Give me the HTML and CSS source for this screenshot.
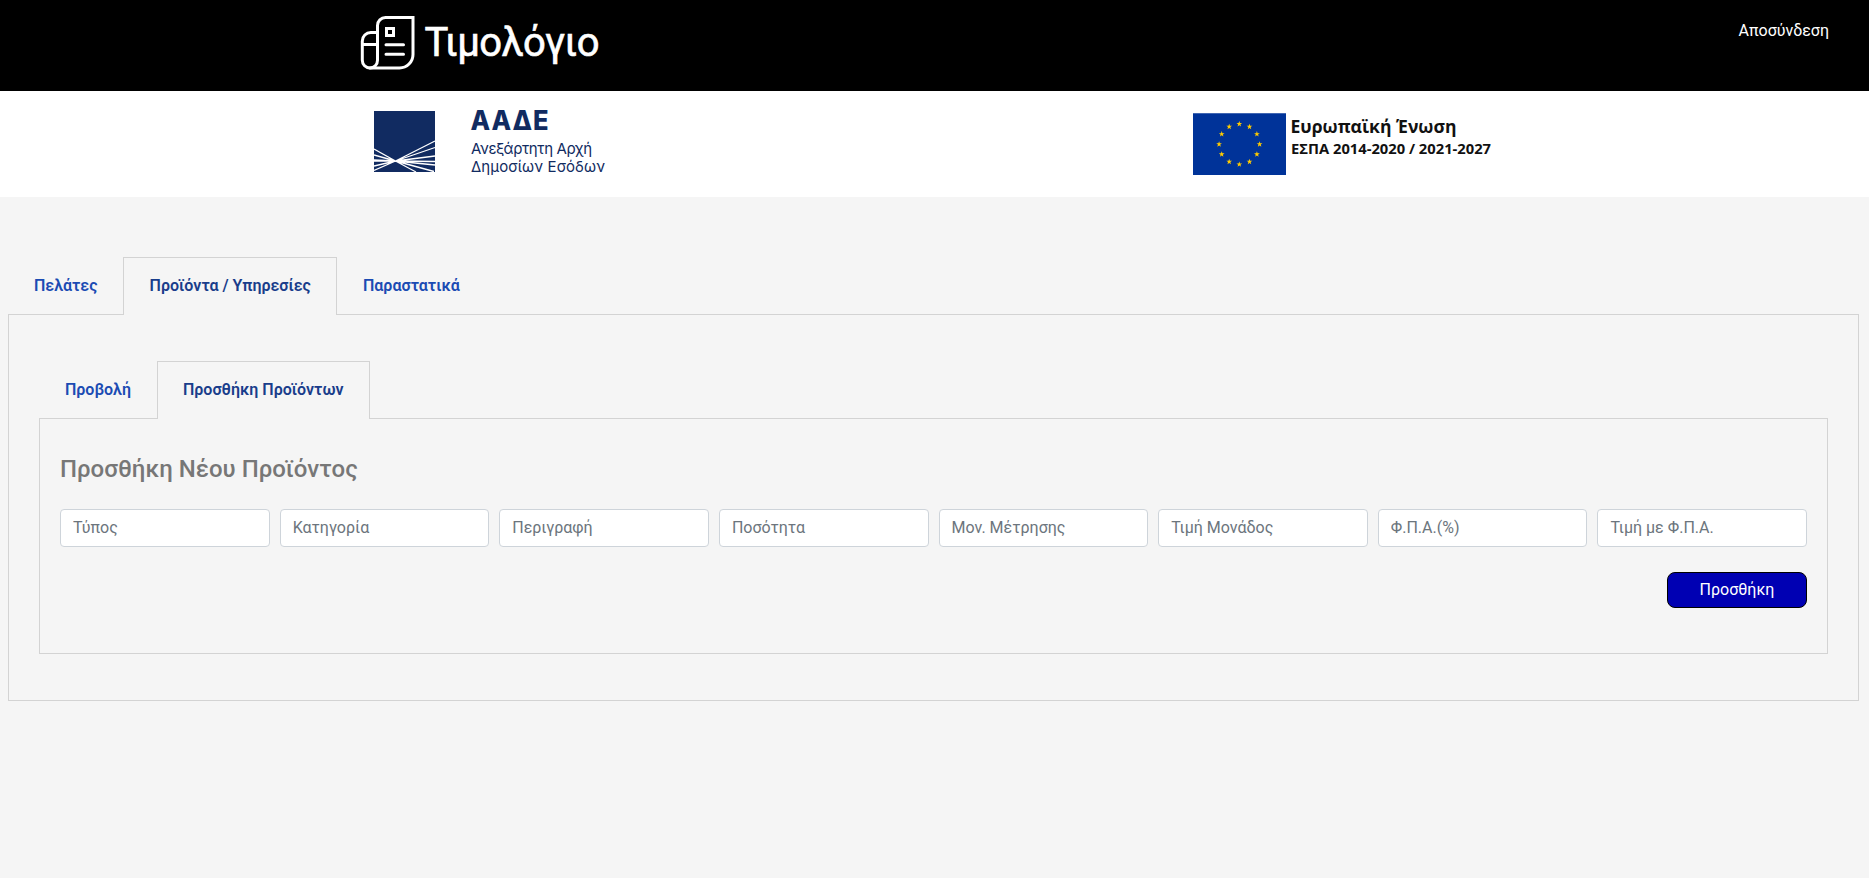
FILE: index.html
```html
<!DOCTYPE html>
<html lang="el">
<head>
<meta charset="utf-8">
<title>Τιμολόγιο</title>
<link rel="stylesheet" href="styles.css">
</head>
<body>
<header class="topbar">
  <svg class="brand" width="250" height="72" viewBox="0 0 250 72" aria-label="Τιμολόγιο">
    <g fill="none" stroke="#fff" stroke-width="3" stroke-linecap="round">
      <path d="M18.500 58V25.500a8 8 0 0 1 8-8H54V54.500a13.500 13.500 0 0 1-13.500 13.500H11a7.700 7.700 0 0 1-7.700-7.700V41a8.500 8.500 0 0 1 8.500-8.500H18.500"/>
      <path d="M18.500 56V60.300a7.600 7.600 0 0 1-7.600 7.700M3.500 44.500H18.500"/>
      <path d="M27.500 28.500h7v7h-7zM27 44.700H44.500M27 54.300H44.500"/>
    </g>
    <text class="brand-text" x="65.500" y="55.500" textLength="175" lengthAdjust="spacing">Τιμολόγιο</text>
  </svg>
  <a class="logout">Αποσύνδεση</a>
</header>
<div class="partners">
  <svg class="aade" width="240" height="106" viewBox="0 0 240 106">
    <path d="M0 20h61v61H0z" fill="#112b61"/>
    <path d="M21.500 70 0 58M21.500 70 0 64M21.500 70 0 69M21.500 70H0M21.500 70 0 75M21.500 70 0 79.500M21.500 70 61 50M21.500 70 61 56.500M21.500 70 61 65M21.500 70 61 70.500M21.500 70 61 74M21.500 70 60 80.500M21.500 70 42 81" stroke="#fff" stroke-width="1.300" fill="none"/>
    <g fill="#112b61">
      <text class="aade-name" x="96.500" y="39.300" textLength="79" lengthAdjust="spacingAndGlyphs">ΑΑΔΕ</text>
      <text class="aade-sub" x="97" y="63" textLength="121" lengthAdjust="spacing">Ανεξάρτητη Αρχή</text>
      <text class="aade-sub" x="97" y="80.800" textLength="134" lengthAdjust="spacing">Δημοσίων Εσόδων</text>
    </g>
  </svg>
  <svg class="eu" width="310" height="106" viewBox="0 0 310 106">
    <defs><path id="star" fill="#fc0" d="M0-3 .71-.97 2.850-.93 1.140.37 1.760 2.430 0 1.200-1.760 2.430-1.140.37-2.850-.93-.71-.97z"/></defs>
    <path d="M0 22.300h93v61.700H0z" fill="#039"/>
    <use href="#star" x="46.300" y="33"/><use href="#star" x="56.500" y="35.700"/><use href="#star" x="63.900" y="43.100"/>
    <use href="#star" x="66.600" y="53.200"/><use href="#star" x="63.900" y="63.300"/><use href="#star" x="56.500" y="70.700"/>
    <use href="#star" x="46.300" y="73.400"/><use href="#star" x="36.200" y="70.700"/><use href="#star" x="28.700" y="63.300"/>
    <use href="#star" x="26.100" y="53.200"/><use href="#star" x="28.700" y="43.100"/><use href="#star" x="36.200" y="35.700"/>
    <text class="eu-name" x="97.500" y="42" textLength="166" lengthAdjust="spacingAndGlyphs">Ευρωπαϊκή Ένωση</text>
    <text class="eu-sub" x="98" y="63.300" textLength="200" lengthAdjust="spacingAndGlyphs">ΕΣΠΑ 2014-2020 / 2021-2027</text>
  </svg>
</div>
<main class="page">
  <nav class="tabs">
    <a class="tab tab-clients">Πελάτες</a>
    <a class="tab tab-products active">Προϊόντα / Υπηρεσίες</a>
    <a class="tab">Παραστατικά</a>
  </nav>
  <section class="panel outer">
    <nav class="tabs">
      <a class="tab tab-view">Προβολή</a>
      <a class="tab tab-add active">Προσθήκη Προϊόντων</a>
    </nav>
    <section class="panel inner">
      <h1 class="title">Προσθήκη Νέου Προϊόντος</h1>
      <form>
        <div class="fields">
          <input class="field" placeholder="Τύπος">
          <input class="field" placeholder="Κατηγορία">
          <input class="field" placeholder="Περιγραφή">
          <input class="field" placeholder="Ποσότητα">
          <input class="field" placeholder="Μον. Μέτρησης">
          <input class="field" placeholder="Τιμή Μονάδος">
          <input class="field" placeholder="Φ.Π.Α.(%)">
          <input class="field" placeholder="Τιμή με Φ.Π.Α.">
        </div>
        <button class="submit" type="button">Προσθήκη</button>
      </form>
    </section>
  </section>
</main>
</body>
</html>
```
FILE: styles.css
```css
* { box-sizing: border-box; }
body {
  margin: 0;
  background: #f5f5f5;
  font: 16px/24px Roboto, sans-serif;
}
.topbar {
  display: flex;
  justify-content: space-between;
  align-items: flex-start;
  height: 91px;
  padding: 0 40px 0 359px;
  background: #000;
  color: #fff;
}
.brand { display: block; }
.brand-text { font: 400 40px Roboto, sans-serif; fill: #fff; stroke: #fff; stroke-width: .6px; }
.logout { margin-top: 19px; }
.partners {
  display: flex;
  justify-content: space-between;
  height: 106px;
  padding: 0 366px 0 374px;
  background: #fff;
}
.aade-name { font: 800 26.500px Inter, sans-serif; letter-spacing: 1px; }
.aade-sub { font: 400 15px Inter, sans-serif; }
.eu-name { font: 700 18.500px "Open Sans", sans-serif; fill: #111; }
.eu-sub { font: 700 14px "Open Sans", sans-serif; fill: #111; }
.page { padding: 60px 10px 0 8px; }
.tabs { display: flex; height: 58px; margin-bottom: -1px; }
.tab {
  border: 1px solid transparent;
  padding: 16px 25px 0;
  color: #1b4bb3;
  font-weight: 600;
}
.tab.active {
  border-color: #d3d3d3;
  border-bottom: 0;
  background: #f5f5f5;
  color: #193d8b;
  position: relative;
}
.tab-clients { width: 115px; }
.tab-products { width: 214px; padding-left: 25.600px; white-space: nowrap; }
.tab-view { width: 118px; }
.tab-add { width: 213px; white-space: nowrap; }
.panel { border: 1px solid #d3d3d3; }
.outer { height: 387px; padding: 46px 30px 0; }
.inner { height: 236px; padding: 35px 20px 0; }
.title {
  margin: 0 0 24px;
  color: #777;
  font-size: 24px;
  line-height: 31px;
  font-weight: 500;
}
.fields { display: flex; gap: 10px; }
.field {
  flex: 1;
  min-width: 0;
  height: 38px;
  padding: 5px 12px 7px;
  border: 1px solid #ced4da;
  border-radius: 4px;
  background: #fff;
  font: inherit;
}
.field::placeholder { color: #6c757d; opacity: 1; }
.submit {
  display: block;
  width: 140px;
  height: 36px;
  margin: 25px 0 0 auto;
  padding: 0;
  border: 1px solid #000;
  border-radius: 8px;
  background: #0000b3;
  color: #fff;
  font: inherit;
}
```
